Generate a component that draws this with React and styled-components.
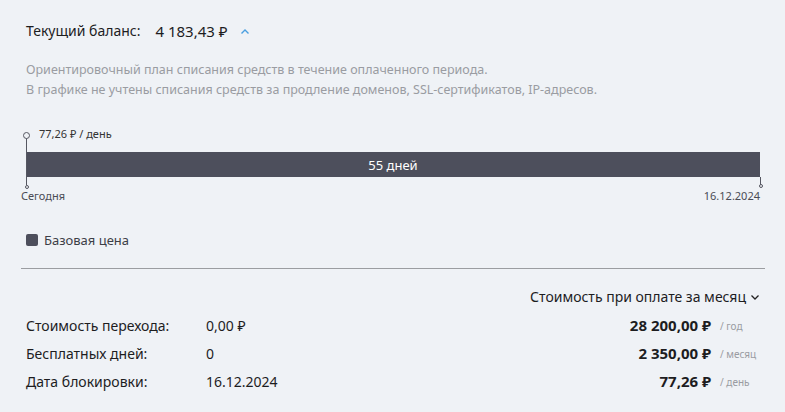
import React from "react";
import styled, { createGlobalStyle } from "styled-components";

const Global = createGlobalStyle`
  html, body { margin: 0; padding: 0; background: #eff2f6; }
  body { font-family: "Noto Sans", "Open Sans", sans-serif; color: #222; }
`;

const Page = styled.div`
  width: 785px;
  box-sizing: border-box;
  padding: 21px 20px 0 21px;
  display: flex;
  flex-direction: column;
`;

const Inset = styled.div`
  padding: 0 5px;
`;

const Header = styled(Inset)`
  display: flex;
  align-items: center;
  height: 20px;
  font-size: 14px;
  line-height: 20px;
  color: #1d1d1f;
`;

const Balance = styled.span`
  margin-left: 15px;
  font-size: 15px;
`;

const Chevron = styled.svg`
  margin-left: 12px;
  margin-top: 1px;
`;

const Desc = styled(Inset)`
  margin-top: 19px;
  font-size: 12.5px;
  line-height: 20px;
  color: #9a9ca2;
`;

const Timeline = styled(Inset)`
  position: relative;
  margin-top: 27px;
  display: flex;
  flex-direction: column;
`;

const RateLabel = styled.div`
  height: 14px;
  line-height: 14px;
  font-size: 11px;
  color: #333;
  padding-left: 13px;
`;

const Bar = styled.div`
  margin-top: 11px;
  height: 25px;
  background: #4d4f5c;
  color: #fff;
  font-size: 13px;
  display: flex;
  align-items: center;
  justify-content: center;
`;

const Ends = styled.div`
  margin-top: 12px;
  display: flex;
  justify-content: space-between;
  font-size: 11px;
  line-height: 14px;
  color: #4a4c55;
  margin-left: -5px;
`;

const Tick = styled.div`
  position: absolute;
  left: ${(p) => p.$x}px;
  top: ${(p) => p.$top}px;
  width: 1px;
  height: ${(p) => p.$h}px;
  background: #555761;
`;

const Dot = styled.div`
  position: absolute;
  box-sizing: border-box;
  left: ${(p) => p.$x - p.$d / 2 + 0.5}px;
  top: ${(p) => p.$y - p.$d / 2}px;
  width: ${(p) => p.$d}px;
  height: ${(p) => p.$d}px;
  border-radius: 50%;
  border: 1px solid #555761;
  background: #eff2f6;
`;

const Legend = styled(Inset)`
  margin-top: 28px;
  display: flex;
  align-items: center;
  gap: 6px;
  font-size: 13px;
  line-height: 18px;
  color: #3d3f47;
`;

const Swatch = styled.span`
  width: 12px;
  height: 12px;
  border-radius: 2px;
  background: #4d4f5c;
`;

const Divider = styled.hr`
  margin: 19px 0 0;
  border: none;
  height: 1px;
  background: #9b9da1;
`;

const PeriodSelect = styled(Inset)`
  margin-top: 18px;
  display: flex;
  justify-content: flex-end;
  align-items: center;
  gap: 4px;
  font-size: 14px;
  line-height: 20px;
  color: #1d1d1f;
`;

const Table = styled(Inset)`
  margin-top: 4px;
  display: grid;
  grid-template-columns: 180px 1fr auto 40px;
  column-gap: 0;
  grid-auto-rows: 28px;
  align-items: center;
  font-size: 14px;
  color: #1d1d1f;
`;

const Amount = styled.span`
  font-weight: 700;
  font-size: 15px;
  text-align: right;
  padding-right: 9px;
`;

const Unit = styled.span`
  font-size: 10px;
  color: #9a9ca2;
  padding-top: 2px;
`;

const rows = [
  ["Стоимость перехода:", "0,00 ₽", "28 200,00 ₽", "/ год"],
  ["Бесплатных дней:", "0", "2 350,00 ₽", "/ месяц"],
  ["Дата блокировки:", "16.12.2024", "77,26 ₽", "/ день"],
];

export default function App() {
  return (
    <>
      <Global />
      <Page>
        <Header>
          <span>Текущий баланс:</span>
          <Balance>4 183,43 ₽</Balance>
          <Chevron width="10" height="7" viewBox="0 0 10 7">
            <polyline points="1.5,5.5 5,2 8.5,5.5" fill="none" stroke="#4a9fe0" strokeWidth="1.4" />
          </Chevron>
        </Header>
        <Desc>
          Ориентировочный план списания средств в течение оплаченного периода.
          <br />
          В графике не учтены списания средств за продление доменов, SSL-сертификатов, IP-адресов.
        </Desc>
        <Timeline>
          <RateLabel>77,26 ₽ / день</RateLabel>
          <Bar>55 дней</Bar>
          <Ends>
            <span>Сегодня</span>
            <span>16.12.2024</span>
          </Ends>
          <Tick $x={5} $top={10} $h={48} />
          <Dot $x={5} $y={8} $d={7} />
          <Dot $x={5} $y={60} $d={4} />
          <Tick $x={739} $top={50} $h={8} />
          <Dot $x={739} $y={59} $d={4} />
        </Timeline>
        <Legend>
          <Swatch />
          Базовая цена
        </Legend>
        <Divider />
        <PeriodSelect>
          Стоимость при оплате за месяц
          <svg width="10" height="7" viewBox="0 0 10 7">
            <polyline points="1.5,1.5 5,5 8.5,1.5" fill="none" stroke="#222" strokeWidth="1.3" />
          </svg>
        </PeriodSelect>
        <Table>
          {rows.map((r) => (
            <React.Fragment key={r[0]}>
              <span>{r[0]}</span>
              <span>{r[1]}</span>
              <Amount>{r[2]}</Amount>
              <Unit>{r[3]}</Unit>
            </React.Fragment>
          ))}
        </Table>
      </Page>
    </>
  );
}
